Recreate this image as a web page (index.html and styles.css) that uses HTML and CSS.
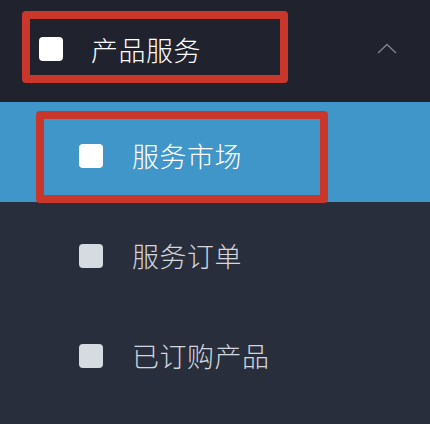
FILE: index.html
```html
<!DOCTYPE html>
<html lang="zh-CN">
<head>
<meta charset="utf-8">
<title>产品服务</title>
<link rel="stylesheet" href="styles.css">
</head>
<body>
<nav class="menu">
  <div class="menu-head">
    <span class="icon icon-white"></span>
    <span class="label label-head">产品服务</span>
    <svg class="chevron" width="20" height="11" viewBox="0 0 20 11" aria-hidden="true">
      <polyline points="1,10 10,1.5 19,10" fill="none" stroke="#7f838d" stroke-width="1.4"/>
    </svg>
  </div>
  <ul class="submenu">
    <li class="item active"><span class="icon icon-white"></span><span class="label">服务市场</span></li>
    <li class="item"><span class="icon"></span><span class="label">服务订单</span></li>
    <li class="item"><span class="icon"></span><span class="label">已订购产品</span></li>
  </ul>
  <div class="mark mark-head"></div>
  <div class="mark mark-item"></div>
</nav>
</body>
</html>
```
FILE: styles.css
```css
html, body {
  margin: 0;
  padding: 0;
}
body {
  width: 430px;
  height: 424px;
  background: #282e3c;
  font-family: "Noto Sans CJK SC", "Noto Sans", sans-serif;
  overflow: hidden;
}
.menu {
  position: relative;
  width: 430px;
  height: 424px;
  background: #282e3c;
}
.menu-head {
  height: 102px;
  box-sizing: border-box;
  padding: 0 33px 4px 39px;
  background: #20222e;
  display: flex;
  align-items: center;
}
.icon {
  width: 24px;
  height: 24px;
  border-radius: 4px;
  background: #d6dae1;
  flex: none;
}
.icon-white {
  background: #ffffff;
}
.label {
  font-size: 27px;
  font-weight: 300;
  line-height: 1;
  color: #d3d6dc;
  margin-left: 28px;
  letter-spacing: 0.5px;
}
.label-head {
  color: #ffffff;
  flex: 1;
}
.chevron {
  flex: none;
  margin-top: -2px;
}
.submenu {
  list-style: none;
  margin: 0;
  padding: 0;
}
.item {
  height: 100px;
  box-sizing: border-box;
  padding: 7px 0 0 79px;
  display: flex;
  align-items: center;
}
.item .label {
  margin-left: 29px;
}
.item.active {
  background: #4196c9;
}
.item.active .label {
  color: #ffffff;
}
.mark {
  position: absolute;
  border: 8px solid #c9372b;
  border-radius: 4px;
  box-sizing: border-box;
}
.mark-head {
  left: 22px;
  top: 11px;
  width: 266px;
  height: 72px;
}
.mark-item {
  left: 36px;
  top: 111px;
  width: 292px;
  height: 92px;
}
```
